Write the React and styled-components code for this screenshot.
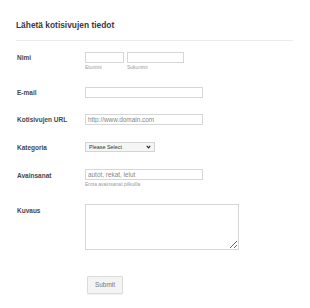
import React from "react";
import styled, { createGlobalStyle } from "styled-components";

const Global = createGlobalStyle`
  html, body { margin: 0; padding: 0; background: #fff; }
  body { font-family: "Liberation Sans", Arial, sans-serif; }
  * { box-sizing: border-box; }
`;

const Page = styled.div`
  width: 310px;
  height: 308px;
  padding: 20px 17px 0 16px;
  background: #fff;
`;

const Header = styled.div`
  border-bottom: 1px solid #ececec;
  padding-bottom: 10px;
`;

const Title = styled.h1`
  margin: 0;
  font-size: 8.4px;
  line-height: 10px;
  font-weight: bold;
  color: #3a3a3a;
`;

const Form = styled.form`
  margin-top: 3px;
  display: flex;
  flex-direction: column;
`;

const Row = styled.div`
  display: flex;
  align-items: flex-start;
  padding: 8px 0;
`;

const Label = styled.label`
  width: 69px;
  flex: none;
  padding-left: 1px;
  padding-top: ${(p) => p.$pt || 0}px;
  font-size: 6.5px;
  line-height: 11px;
  font-weight: bold;
  color: #484848;
`;

const Field = styled.div`
  display: flex;
  flex-direction: column;
`;

const Pair = styled.div`
  display: flex;
  gap: 3px;
`;

const Input = styled.input`
  display: block;
  width: ${(p) => p.$w}px;
  height: 11px;
  border: 1px solid #d6d6d6;
  border-radius: 0;
  padding: 0 2px;
  margin: 0;
  font-family: inherit;
  font-size: 6.4px;
  color: #666;
  background: #fff;
  outline: none;
  &::placeholder { color: #888; }
`;

const Sub = styled.span`
  margin-top: 1px;
  font-size: 5px;
  line-height: 7px;
  color: #9a9a9a;
`;

const SelectWrap = styled.div`
  position: relative;
  width: 70px;
  height: 10px;
  margin-top: 1px;
`;

const Select = styled.select`
  appearance: none;
  -webkit-appearance: none;
  display: block;
  width: 70px;
  height: 10px;
  margin: 0;
  padding: 0 0 0 3px;
  border: 1px solid #d4d4d4;
  border-radius: 0;
  background: #f5f5f5;
  font-family: inherit;
  font-size: 5.4px;
  line-height: 8px;
  color: #333;
  outline: none;
`;

const Chevron = styled.svg`
  position: absolute;
  right: 4px;
  top: 3px;
  width: 5px;
  height: 4px;
  pointer-events: none;
`;

const TextArea = styled.textarea`
  width: 154px;
  height: 46px;
  margin: 0;
  border: 1px solid #d6d6d6;
  border-radius: 0;
  padding: 2px;
  font-family: inherit;
  font-size: 6.4px;
  outline: none;
  display: block;
`;

const ButtonRow = styled.div`
  padding: 15px 0 0 71px;
`;

const Button = styled.button`
  width: 36px;
  height: 18px;
  margin: 0;
  padding: 0;
  border: 1px solid #dcdcdc;
  border-radius: 1px;
  background: #f4f4f4;
  box-shadow: 0 1px 1px rgba(0, 0, 0, 0.06);
  font-family: inherit;
  font-size: 6.4px;
  color: #777;
`;

export default function App() {
  return (
    <Page>
      <Global />
      <Header>
        <Title>Lähetä kotisivujen tiedot</Title>
      </Header>
      <Form onSubmit={(e) => e.preventDefault()}>
        <Row>
          <Label>Nimi</Label>
          <Pair>
            <Field>
              <Input $w={39} />
              <Sub>Etunimi</Sub>
            </Field>
            <Field>
              <Input $w={57} />
              <Sub>Sukunimi</Sub>
            </Field>
          </Pair>
        </Row>
        <Row>
          <Label>E-mail</Label>
          <Input $w={118} />
        </Row>
        <Row>
          <Label>Kotisivujen URL</Label>
          <Input $w={118} placeholder="http://www.domain.com" />
        </Row>
        <Row>
          <Label $pt={1}>Kategoria</Label>
          <SelectWrap>
            <Select defaultValue="">
              <option value="">Please Select</option>
            </Select>
            <Chevron viewBox="0 0 8 6">
              <path d="M1.2 1.3 L4 4.3 L6.8 1.3" fill="none" stroke="#222" strokeWidth="1.8" />
            </Chevron>
          </SelectWrap>
        </Row>
        <Row>
          <Label $pt={1}>Avainsanat</Label>
          <Field>
            <Input $w={118} placeholder="autot, rekat, lelut" />
            <Sub>Erota avainsanat pilkuilla</Sub>
          </Field>
        </Row>
        <Row>
          <Label $pt={1}>Kuvaus</Label>
          <TextArea />
        </Row>
        <ButtonRow>
          <Button type="submit">Submit</Button>
        </ButtonRow>
      </Form>
    </Page>
  );
}
